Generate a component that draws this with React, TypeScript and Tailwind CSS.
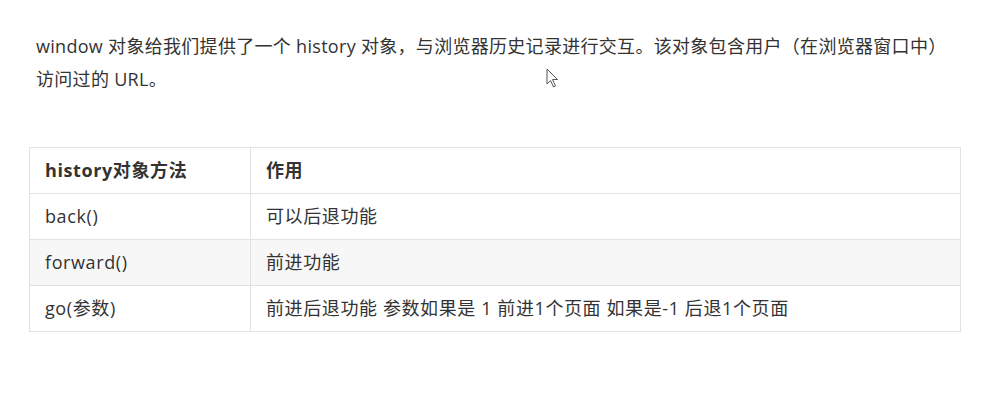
import React from "react";

const rows = [
  { method: "back()", desc: "可以后退功能" },
  { method: "forward()", desc: "前进功能" },
  { method: "go(参数)", desc: "前进后退功能 参数如果是 1 前进1个页面 如果是-1 后退1个页面" },
];

const font = { fontFamily: '"Open Sans", "Noto Sans CJK SC", sans-serif' };

export default function App() {
  return (
    <div className="relative w-[1008px] h-[407px] bg-white text-[#333]" style={font}>
      <div className="pl-[36px] pr-[40px] pt-[30px]">
        <p className="text-[18px] leading-[33px] tracking-[0.3px]">
          window 对象给我们提供了一个 history 对象，与浏览器历史记录进行交互。该对象包含用户（在浏览器窗口中）
          <br />
          访问过的 URL。
        </p>
      </div>

      <div className="pl-[29px] pt-[51px]">
        <table className="w-[932px] border-collapse text-[18px] tracking-[0.6px]">
          <thead>
            <tr className="h-[46px]">
              <th className="w-[221px] border border-[#e2e2e2] px-[15px] text-left font-bold">history对象方法</th>
              <th className="border border-[#e2e2e2] px-[15px] text-left font-bold">作用</th>
            </tr>
          </thead>
          <tbody>
            {rows.map((r, i) => (
              <tr key={r.method} className={i === 1 ? "h-[46px] bg-[#f7f7f7]" : "h-[46px]"}>
                <td className="border border-[#e2e2e2] px-[15px]">{r.method}</td>
                <td className="border border-[#e2e2e2] px-[15px]">{r.desc}</td>
              </tr>
            ))}
          </tbody>
        </table>
      </div>

      {/* mouse pointer */}
      <svg className="absolute left-[546px] top-[68px]" width="14" height="22" viewBox="0 0 14 22">
        <path d="M1 1 L1 16 L4.5 12.5 L7.5 19 L9.5 18 L6.5 11.5 L11.5 11.5 Z" fill="white" stroke="#555" strokeWidth="1" strokeLinejoin="round" />
      </svg>
    </div>
  );
}
